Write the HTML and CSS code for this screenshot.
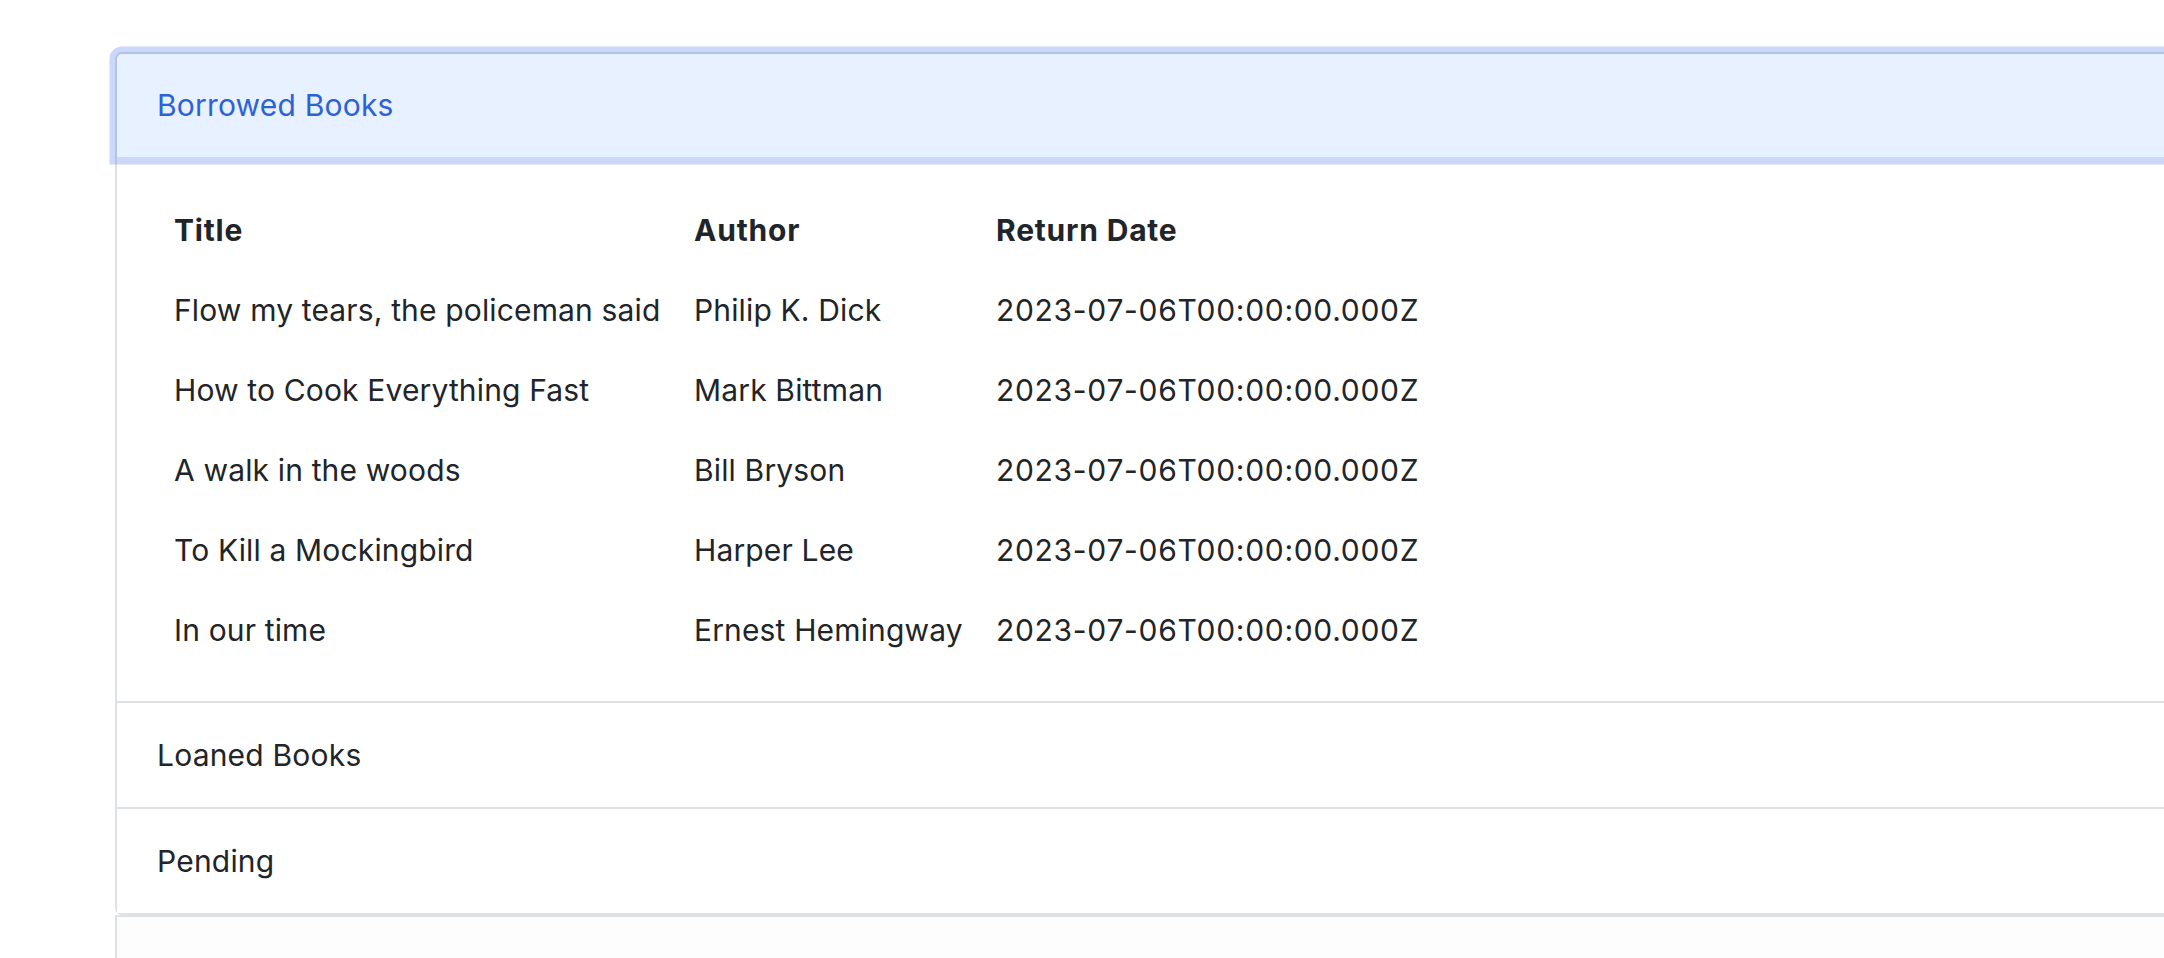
FILE: index.html
```html
<!DOCTYPE html>
<html lang="en">
<head>
<meta charset="utf-8">
<title>Books</title>
<link rel="stylesheet" href="styles.css">
</head>
<body>
<main class="page">
  <div class="accordion">
    <section class="acc-item acc-first">
      <h2 class="acc-header">
        <button class="acc-button acc-open" type="button">Borrowed Books</button>
      </h2>
      <div class="acc-body">
        <table class="books">
          <colgroup>
            <col class="col-title">
            <col class="col-author">
            <col class="col-date">
          </colgroup>
          <thead>
            <tr><th>Title</th><th>Author</th><th>Return Date</th></tr>
          </thead>
          <tbody>
            <tr><td>Flow my tears, the policeman said</td><td>Philip K. Dick</td><td class="date">2023-07-06T00:00:00.000Z</td></tr>
            <tr><td>How to Cook Everything Fast</td><td>Mark Bittman</td><td class="date">2023-07-06T00:00:00.000Z</td></tr>
            <tr><td>A walk in the woods</td><td>Bill Bryson</td><td class="date">2023-07-06T00:00:00.000Z</td></tr>
            <tr><td>To Kill a Mockingbird</td><td>Harper Lee</td><td class="date">2023-07-06T00:00:00.000Z</td></tr>
            <tr><td>In our time</td><td>Ernest Hemingway</td><td class="date">2023-07-06T00:00:00.000Z</td></tr>
          </tbody>
        </table>
      </div>
    </section>
    <section class="acc-item">
      <h2 class="acc-header">
        <button class="acc-button" type="button">Loaned Books</button>
      </h2>
    </section>
    <section class="acc-item acc-last">
      <h2 class="acc-header">
        <button class="acc-button" type="button">Pending</button>
      </h2>
    </section>
  </div>
  <div class="next-card"></div>
</main>
</body>
</html>
```

FILE: styles.css
```css
* { box-sizing: border-box; }

html, body {
  margin: 0;
  padding: 0;
  background: #ffffff;
  overflow: hidden;
}

body {
  font-family: Inter, "Noto Sans", "Liberation Sans", sans-serif;
  font-size: 30px;
  line-height: 45px;
  color: #212529;
}

.page {
  padding: 52px 0 0 115px;
  width: 2500px;
}

.accordion {
  width: 2300px;
}

.acc-item {
  border: 2px solid #dee2e6;
  background: #ffffff;
}

.acc-item + .acc-item {
  border-top: 0;
}

.acc-first {
  border-top-left-radius: 7px;
  border-top-right-radius: 7px;
}

.acc-last {
  border-bottom-left-radius: 7px;
  border-bottom-right-radius: 7px;
}

.acc-header {
  margin: 0;
  font-size: inherit;
  font-weight: 400;
}

.acc-button {
  display: flex;
  align-items: center;
  width: 100%;
  height: 104px;
  padding: 0 37px 0 40px;
  margin: 0;
  border: 0;
  background: #ffffff;
  font: inherit;
  font-size: 30px;
  line-height: 45px;
  color: #212529;
  text-align: left;
  letter-spacing: 0.2px;
}

.acc-open {
  position: relative;
  z-index: 3;
  height: 103px;
  background: #e7f1ff;
  color: #2d62d6;
  border-top-left-radius: 5px;
  border-top-right-radius: 5px;
  box-shadow: 0 0 0 7.5px rgba(51, 99, 235, 0.25);
}

.acc-body {
  padding: 33px 42px 31px;
}

.books {
  border-collapse: collapse;
  table-layout: fixed;
  width: 1300px;
}

.col-title { width: 520px; }
.col-author { width: 302px; }

.books th,
.books td {
  padding: 17px 15px;
  line-height: 46px;
  text-align: left;
  white-space: nowrap;
  vertical-align: top;
}

.books th {
  font-weight: 700;
  letter-spacing: 0.8px;
}

.books td {
  font-weight: 400;
  letter-spacing: 0.15px;
}

.books td.date {
  letter-spacing: 0.7px;
}

.next-card {
  width: 2300px;
  height: 120px;
  border: 2px solid #dee2e6;
  border-bottom: 0;
  background: #fdfdfd;
}
```
